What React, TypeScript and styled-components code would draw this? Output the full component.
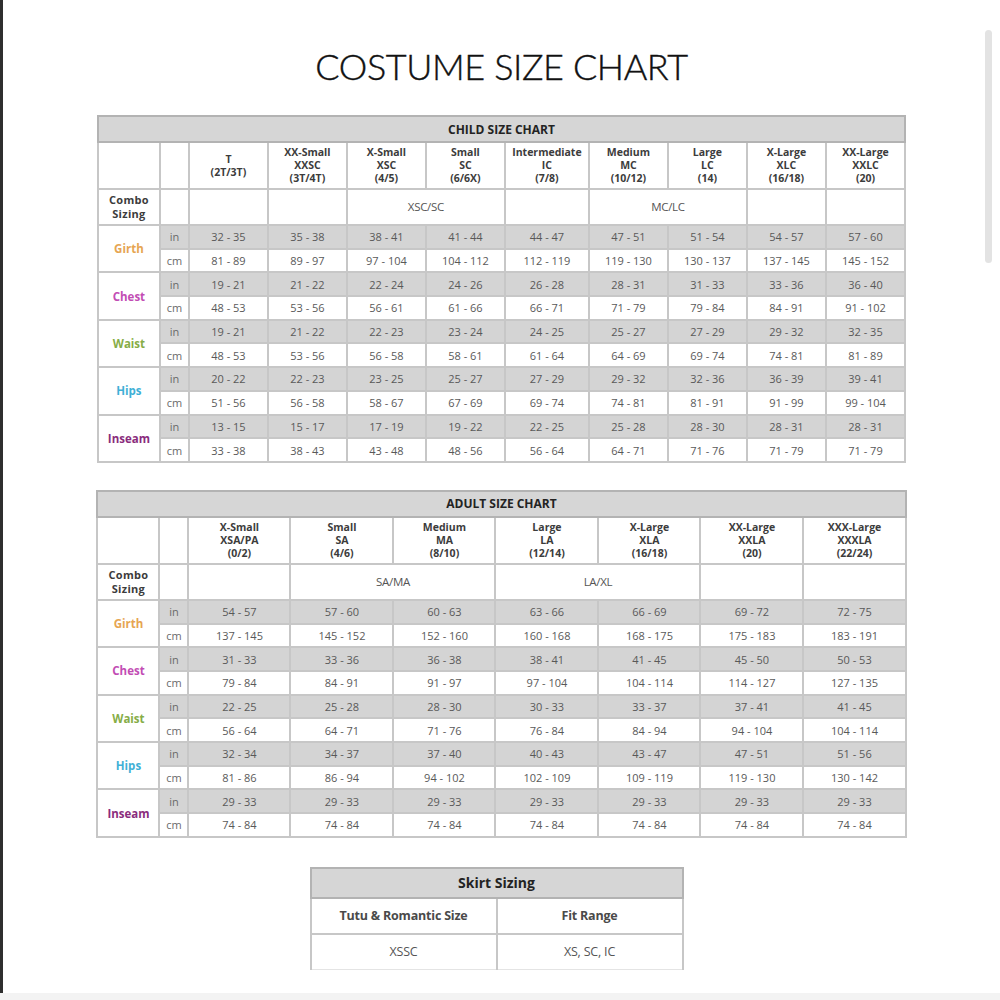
import React from "react";
import styled, { createGlobalStyle } from "styled-components";

const Global = createGlobalStyle`
  html, body { margin: 0; padding: 0; background: #f3f3f3; }
  body { font-family: "Open Sans", "Liberation Sans", sans-serif; }
`;

const Page = styled.div`
  position: relative;
  width: 997px;
  height: 993px;
  background: #ffffff;
  border-left: 3px solid #2e2e2e;
  display: flex;
  flex-direction: column;
  align-items: center;
  overflow: hidden;
`;

const Title = styled.h1`
  margin: 46px 0 0 0;
  height: 40px;
  line-height: 40px;
  font-family: "Lato", "DejaVu Sans", sans-serif;
  font-weight: 300;
  font-size: 36px;
  letter-spacing: -0.4px;
  color: #111111;
  -webkit-text-stroke: 0.4px #111111;
`;

const Scroll = styled.div`
  position: absolute;
  right: 8px;
  top: 30px;
  width: 7px;
  height: 233px;
  border-radius: 4px;
  background: #e3e3e3;
`;

const Table = styled.table<{ $top: number; $width: number; $shift?: number }>`
  margin-top: ${(p) => p.$top}px;
  margin-left: ${(p) => (p.$shift ? p.$shift * 2 : 0)}px;
  width: ${(p) => p.$width}px;
  border-collapse: collapse;
  table-layout: fixed;
  border: 2px solid #b3b3b3;
`;

const Band = styled.th<{ $h: number; $size: number }>`
  height: ${(p) => p.$h}px;
  background: #d6d6d6;
  border: 2px solid #b3b3b3;
  font-weight: 700;
  font-size: ${(p) => p.$size}px;
  color: #232323;
  padding: 0;
  text-align: center;
`;

const Head = styled.th`
  height: 45px;
  border: 2px solid #c7c7c7;
  font-weight: 700;
  font-size: 10.5px;
  line-height: 13px;
  color: #3c3c3c;
  padding: 0;
  text-align: center;
  vertical-align: middle;
`;

const Combo = styled.td<{ $bold?: boolean }>`
  height: 34px;
  border: 2px solid #c7c7c7;
  font-weight: ${(p) => (p.$bold ? 700 : 400)};
  font-size: ${(p) => (p.$bold ? 11 : 11.5)}px;
  line-height: 14px;
  color: ${(p) => (p.$bold ? "#3c3c3c" : "#555")};
  padding: 0;
  text-align: center;
  vertical-align: middle;
  letter-spacing: ${(p) => (p.$bold ? 0.3 : -0.3)}px;
`;

const Label = styled.td<{ $color: string }>`
  border: 2px solid #c7c7c7;
  background: #ffffff;
  color: ${(p) => p.$color};
  font-weight: 700;
  font-size: 11.5px;
  text-align: center;
  padding: 0;
`;

const Cell = styled.td<{ $shade: boolean }>`
  height: 21.7px;
  border: 2px solid #c7c7c7;
  background: ${(p) => (p.$shade ? "#d4d4d4" : "#ffffff")};
  color: #595959;
  font-size: 11px;
  text-align: center;
  padding: 0;
  white-space: nowrap;
`;

const Unit = styled(Cell)`
  color: #6a6a6a;
  font-size: 11px;
`;

const SkirtCell = styled.td<{ $bold?: boolean }>`
  height: 34px;
  border: 2px solid #c7c7c7;
  border-bottom: ${(p) => (p.$bold ? "2px solid #c7c7c7" : "1px solid #e4e4e4")};
  font-weight: ${(p) => (p.$bold ? 700 : 400)};
  font-size: 12.5px;
  color: ${(p) => (p.$bold ? "#4a4a4a" : "#555")};
  text-align: center;
  padding: 0;
  letter-spacing: -0.2px;
`;

type Measure = { name: string; color: string; inch: string[]; cm: string[] };
type ComboPart = { text: string; span: number };

const MEASURE_COLORS: Record<string, string> = {
  Girth: "#e6a552",
  Chest: "#c24db4",
  Waist: "#86ad47",
  Hips: "#3fb0d6",
  Inseam: "#8a2c7d",
};

const r = (s: string) => s.split(",").map((x) => x.trim().replace("-", " - "));

function SizeChart(props: {
  title: string;
  top: number;
  colWidths: number[];
  headers: string[][];
  combos: ComboPart[];
  measures: Measure[];
}) {
  const { title, top, colWidths, headers, combos, measures } = props;
  const total = 62 + 29 + colWidths.reduce((a, b) => a + b, 0);
  return (
    <Table $top={top} $width={total}>
      <colgroup>
        <col style={{ width: 62 }} />
        <col style={{ width: 29 }} />
        {colWidths.map((w, i) => (
          <col key={i} style={{ width: w }} />
        ))}
      </colgroup>
      <thead>
        <tr>
          <Band $h={24} $size={12} colSpan={colWidths.length + 2}>
            {title}
          </Band>
        </tr>
        <tr>
          <Head />
          <Head />
          {headers.map((h, i) => (
            <Head key={i}>
              {h.map((line, j) => (
                <div key={j}>{line}</div>
              ))}
            </Head>
          ))}
        </tr>
      </thead>
      <tbody>
        <tr>
          <Combo $bold>
            Combo
            <br />
            Sizing
          </Combo>
          <Combo />
          {combos.map((c, i) => (
            <Combo key={i} colSpan={c.span}>
              {c.text}
            </Combo>
          ))}
        </tr>
        {measures.map((m) => (
          <React.Fragment key={m.name}>
            <tr>
              <Label rowSpan={2} $color={m.color}>
                {m.name}
              </Label>
              <Unit $shade>in</Unit>
              {m.inch.map((v, i) => (
                <Cell key={i} $shade>
                  {v}
                </Cell>
              ))}
            </tr>
            <tr>
              <Unit $shade={false}>cm</Unit>
              {m.cm.map((v, i) => (
                <Cell key={i} $shade={false}>
                  {v}
                </Cell>
              ))}
            </tr>
          </React.Fragment>
        ))}
      </tbody>
    </Table>
  );
}

const mk = (name: string, inch: string, cm: string): Measure => ({
  name,
  color: MEASURE_COLORS[name],
  inch: r(inch),
  cm: r(cm),
});

const childMeasures: Measure[] = [
  mk("Girth", "32-35,35-38,38-41,41-44,44-47,47-51,51-54,54-57,57-60", "81-89,89-97,97-104,104-112,112-119,119-130,130-137,137-145,145-152"),
  mk("Chest", "19-21,21-22,22-24,24-26,26-28,28-31,31-33,33-36,36-40", "48-53,53-56,56-61,61-66,66-71,71-79,79-84,84-91,91-102"),
  mk("Waist", "19-21,21-22,22-23,23-24,24-25,25-27,27-29,29-32,32-35", "48-53,53-56,56-58,58-61,61-64,64-69,69-74,74-81,81-89"),
  mk("Hips", "20-22,22-23,23-25,25-27,27-29,29-32,32-36,36-39,39-41", "51-56,56-58,58-67,67-69,69-74,74-81,81-91,91-99,99-104"),
  mk("Inseam", "13-15,15-17,17-19,19-22,22-25,25-28,28-30,28-31,28-31", "33-38,38-43,43-48,48-56,56-64,64-71,71-76,71-79,71-79"),
];

const adultMeasures: Measure[] = [
  mk("Girth", "54-57,57-60,60-63,63-66,66-69,69-72,72-75", "137-145,145-152,152-160,160-168,168-175,175-183,183-191"),
  mk("Chest", "31-33,33-36,36-38,38-41,41-45,45-50,50-53", "79-84,84-91,91-97,97-104,104-114,114-127,127-135"),
  mk("Waist", "22-25,25-28,28-30,30-33,33-37,37-41,41-45", "56-64,64-71,71-76,76-84,84-94,94-104,104-114"),
  mk("Hips", "32-34,34-37,37-40,40-43,43-47,47-51,51-56", "81-86,86-94,94-102,102-109,109-119,119-130,130-142"),
  mk("Inseam", "29-33,29-33,29-33,29-33,29-33,29-33,29-33", "74-84,74-84,74-84,74-84,74-84,74-84,74-84"),
];

const childHeaders = [
  ["T", "(2T/3T)"],
  ["XX-Small", "XXSC", "(3T/4T)"],
  ["X-Small", "XSC", "(4/5)"],
  ["Small", "SC", "(6/6X)"],
  ["Intermediate", "IC", "(7/8)"],
  ["Medium", "MC", "(10/12)"],
  ["Large", "LC", "(14)"],
  ["X-Large", "XLC", "(16/18)"],
  ["XX-Large", "XXLC", "(20)"],
];

const adultHeaders = [
  ["X-Small", "XSA/PA", "(0/2)"],
  ["Small", "SA", "(4/6)"],
  ["Medium", "MA", "(8/10)"],
  ["Large", "LA", "(12/14)"],
  ["X-Large", "XLA", "(16/18)"],
  ["XX-Large", "XXLA", "(20)"],
  ["XXX-Large", "XXXLA", "(22/24)"],
];

const SkirtTable = styled(Table)`
  border-bottom: none;
`;

export default function App() {
  return (
    <>
      <Global />
      <Page>
        <Title>COSTUME SIZE CHART</Title>
        <SizeChart
          title="CHILD SIZE CHART"
          top={29}
          colWidths={[79, 79, 79, 79, 84, 79, 79, 79, 79]}
          headers={childHeaders}
          combos={[
            { text: "", span: 1 },
            { text: "", span: 1 },
            { text: "XSC/SC", span: 2 },
            { text: "", span: 1 },
            { text: "MC/LC", span: 2 },
            { text: "", span: 1 },
            { text: "", span: 1 },
          ]}
          measures={childMeasures}
        />
        <SizeChart
          title="ADULT SIZE CHART"
          top={27}
          colWidths={[102, 103, 102, 103, 102, 103, 102]}
          headers={adultHeaders}
          combos={[
            { text: "", span: 1 },
            { text: "SA/MA", span: 2 },
            { text: "LA/XL", span: 2 },
            { text: "", span: 1 },
            { text: "", span: 1 },
          ]}
          measures={adultMeasures}
        />
        <SkirtTable $top={29} $width={372} $shift={-5}>
          <colgroup>
            <col style={{ width: 186 }} />
            <col style={{ width: 186 }} />
          </colgroup>
          <thead>
            <tr>
              <Band $h={28} $size={14} colSpan={2}>
                Skirt Sizing
              </Band>
            </tr>
          </thead>
          <tbody>
            <tr>
              <SkirtCell $bold>Tutu &amp; Romantic Size</SkirtCell>
              <SkirtCell $bold>Fit Range</SkirtCell>
            </tr>
            <tr>
              <SkirtCell>XSSC</SkirtCell>
              <SkirtCell>XS, SC, IC</SkirtCell>
            </tr>
          </tbody>
        </SkirtTable>
        <Scroll />
      </Page>
    </>
  );
}
